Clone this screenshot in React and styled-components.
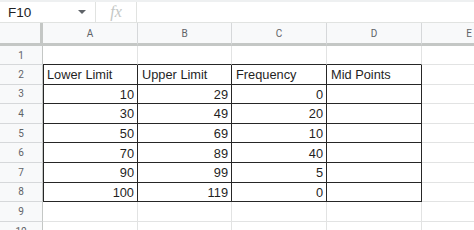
import React from 'react';
import styled, { createGlobalStyle } from 'styled-components';

const Global = createGlobalStyle`
  html, body { margin: 0; padding: 0; background: #fff; }
  body { font-family: Arial, "Liberation Sans", sans-serif; overflow: hidden; }
`;

const COLS = '43px 95px 94px 95px 95px 95px';

const Page = styled.div`
  width: 474px;
  height: 230px;
  overflow: hidden;
  background: #fff;
`;

const TopStrip = styled.div`
  height: 2px;
  background: #eef0f1;
`;

const FormulaBar = styled.div`
  height: 20px;
  display: flex;
  align-items: center;
  border-bottom: 1px solid #e1e3e1;
`;

const NameBox = styled.div`
  width: 96px;
  height: 100%;
  box-sizing: border-box;
  padding: 0 9px 0 8px;
  display: flex;
  align-items: center;
  justify-content: space-between;
  font-size: 13.5px;
  color: #202124;
  border-right: 1px solid #e1e3e1;
`;

const Caret = styled.span`
  width: 0;
  height: 0;
  border-left: 4px solid transparent;
  border-right: 4px solid transparent;
  border-top: 4px solid #5f6368;
`;

const Fx = styled.div`
  width: 41px;
  height: 100%;
  box-sizing: border-box;
  display: flex;
  align-items: center;
  justify-content: center;
  font-family: "Liberation Serif", serif;
  font-style: italic;
  font-size: 16px;
  color: #c4c7c5;
  border-right: 1px solid #e1e3e1;
`;

const Row = styled.div`
  display: grid;
  grid-template-columns: ${COLS};
  height: ${p => p.$h}px;
  width: 474px;
  overflow: hidden;
`;

const Corner = styled.div`
  background: #f8f9fa;
  border-right: 3px solid #c4c7c5;
  border-bottom: 3px solid #c4c7c5;
`;

const ColHead = styled.div`
  background: #f8f9fa;
  border-right: 1px solid #d6d8da;
  border-bottom: 3px solid #c4c7c5;
  display: flex;
  align-items: center;
  justify-content: center;
  font-family: Roboto, Arial, sans-serif;
  font-size: 10px;
  color: #5f6368;
  padding-top: 1px;
  box-sizing: border-box;
  overflow: hidden;
`;

const RowHead = styled.div`
  background: #f8f9fa;
  border-right: 1px solid #c4c7c5;
  border-bottom: 1px solid #d6d8da;
  display: flex;
  align-items: center;
  justify-content: center;
  font-family: Roboto, Arial, sans-serif;
  font-size: 10px;
  color: #5f6368;
  box-sizing: border-box;
`;

const Cell = styled.div`
  box-sizing: border-box;
  border-right: 1px solid ${p => (p.$boxed ? '#262626' : '#e2e3e3')};
  border-bottom: 1px solid ${p => (p.$boxed || p.$topEdge ? '#262626' : '#e2e3e3')};
  box-shadow: ${p => (p.$leftEdge ? 'inset 1px 0 0 #262626' : 'none')};
  display: flex;
  align-items: center;
  justify-content: ${p => (p.$num ? 'flex-end' : 'flex-start')};
  padding: 1px 3px 0 4px;
  font-size: 12.8px;
  color: #1f1f1f;
  white-space: nowrap;
  overflow: hidden;
`;

const header = ['Lower Limit', 'Upper Limit', 'Frequency', 'Mid Points'];
const data = [
  [10, 29, 0],
  [30, 49, 20],
  [50, 69, 10],
  [70, 89, 40],
  [90, 99, 5],
  [100, 119, 0],
];

const heights = [19, 19.6, 19.6, 19.6, 19.6, 19.6, 19.6, 19.6, 19.6, 19.6];

export default function App() {
  const rows = [];
  for (let r = 1; r <= 10; r++) {
    const boxed = r >= 2 && r <= 8;
    let values = ['', '', '', ''];
    let num = false;
    if (r === 2) values = header;
    else if (boxed) {
      values = [...data[r - 3], ''];
      num = true;
    }
    rows.push(
      <Row key={r} $h={heights[r - 1]}>
        <RowHead>{r}</RowHead>
        {values.map((v, i) => (
          <Cell
            key={i}
            $boxed={boxed}
            $topEdge={r === 1}
            $leftEdge={boxed && i === 0}
            $num={num}
          >
            {v}
          </Cell>
        ))}
        <Cell />
      </Row>
    );
  }
  return (
    <Page>
      <Global />
      <TopStrip />
      <FormulaBar>
        <NameBox>
          F10
          <Caret />
        </NameBox>
        <Fx>fx</Fx>
      </FormulaBar>
      <Row $h={23}>
        <Corner />
        {['A', 'B', 'C', 'D', 'E'].map(c => (
          <ColHead key={c}>{c}</ColHead>
        ))}
      </Row>
      {rows}
    </Page>
  );
}
